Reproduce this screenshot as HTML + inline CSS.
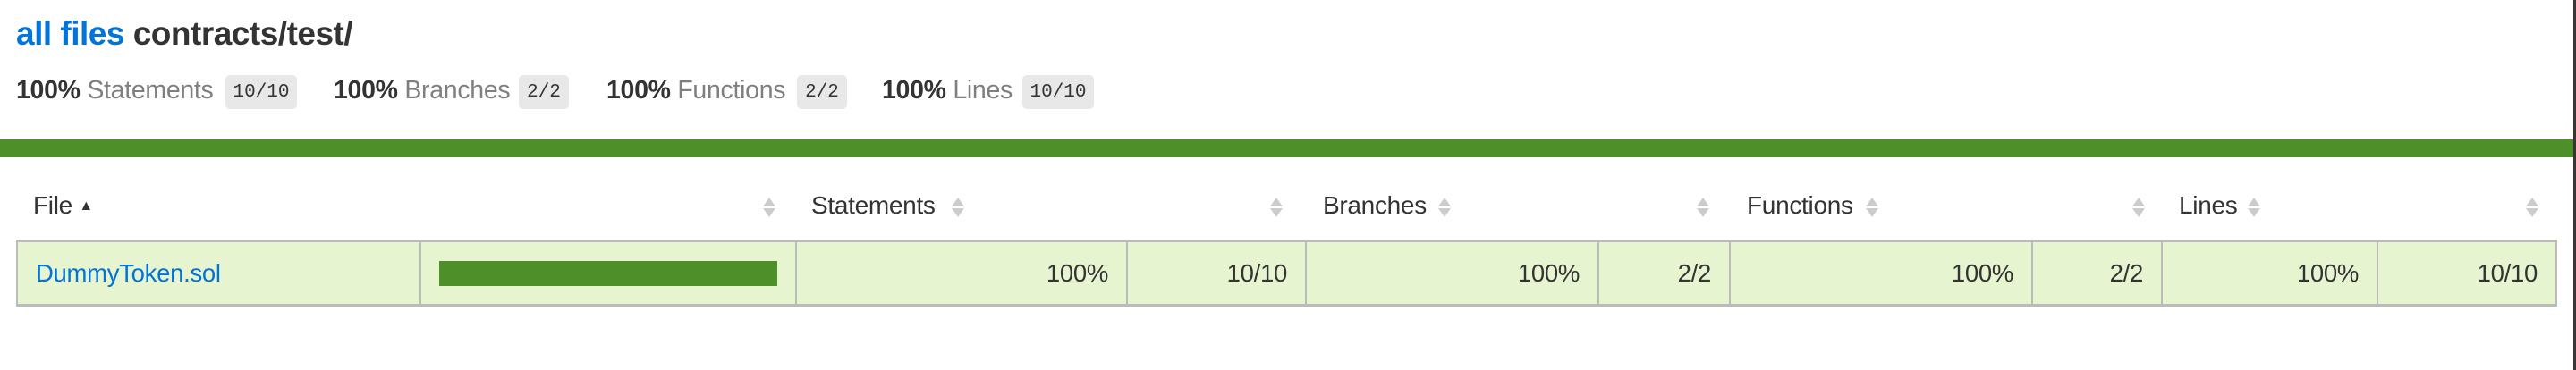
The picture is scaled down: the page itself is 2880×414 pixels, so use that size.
<!DOCTYPE html>
<html><head><meta charset="utf-8"><style>
*{margin:0;padding:0;box-sizing:border-box}
html,body{width:2880px;height:414px;overflow:hidden;background:#3a3533}
#page{position:absolute;left:0;top:0;width:2877px;height:414px;background:#fff;font-family:"Liberation Sans",Arial,sans-serif;color:#333}
.a{position:absolute;white-space:nowrap}
h1{position:absolute;left:18px;top:16px;font-size:37px;font-weight:bold;color:#333;line-height:44px;letter-spacing:-0.5px}
h1 span{color:#0074d9}
.st{font-size:28.5px;line-height:30px;top:86px;letter-spacing:-0.3px}
.st b{color:#333}
.st .q{color:#7f7f7f}
.badge{position:absolute;top:84px;height:38px;background:#e8e8e8;border-radius:5px;font-family:"Liberation Mono",monospace;font-size:21px;line-height:40px;text-align:center;color:#333}
.bar{position:absolute;left:0;top:156px;width:2877px;height:20px;background:#4f8f2a}
.h{font-size:28px;top:215px;line-height:30px;color:#333;letter-spacing:-0.3px}
.sort{position:absolute;top:219px;width:14px;height:26px}
.sort:before{content:"";position:absolute;left:0;top:2px;border-left:7px solid transparent;border-right:7px solid transparent;border-bottom:10px solid #ccc}
.sort:after{content:"";position:absolute;left:0;top:14px;border-left:7px solid transparent;border-right:7px solid transparent;border-top:10px solid #ccc}
table{position:absolute;left:18px;top:268px;width:2841px;border-collapse:collapse;background:#e6f5d0;border-top:3px solid #bbb;border-bottom:3px solid #bbb;border-left:2px solid #bbb;border-right:2px solid #bbb}
td{height:72px;border-left:2px solid #bbb;font-size:27.5px;text-align:right;padding:0 20px;color:#333;letter-spacing:-0.3px}
td:first-child{border-left:none;text-align:left;padding-left:20px}
td a{color:#0074d9;text-decoration:none}
</style></head><body><div id="page">
<h1><span>all files</span> contracts/test/</h1>
<div class="a st" style="left:18px"><b>100%</b> <span class="q">Statements</span></div>
<div class="badge" style="left:252px;width:80px">10/10</div>
<div class="a st" style="left:373px"><b>100%</b> <span class="q">Branches</span></div>
<div class="badge" style="left:580px;width:56px">2/2</div>
<div class="a st" style="left:678px"><b>100%</b> <span class="q">Functions</span></div>
<div class="badge" style="left:891px;width:56px">2/2</div>
<div class="a st" style="left:986px"><b>100%</b> <span class="q">Lines</span></div>
<div class="badge" style="left:1143px;width:80px">10/10</div>
<div class="bar"></div>
<div class="a h" style="left:37px">File <span style="font-size:16px;position:relative;top:-4px">&#9650;</span></div>
<div class="sort" style="left:853px"></div>
<div class="a h" style="left:907px">Statements</div><div class="sort" style="left:1064px"></div>
<div class="sort" style="left:1420px"></div>
<div class="a h" style="left:1479px">Branches</div><div class="sort" style="left:1608px"></div>
<div class="sort" style="left:1897px"></div>
<div class="a h" style="left:1953px">Functions</div><div class="sort" style="left:2086px"></div>
<div class="sort" style="left:2384px"></div>
<div class="a h" style="left:2436px">Lines</div><div class="sort" style="left:2513px"></div>
<div class="sort" style="left:2824px"></div>
<table><tr>
<td style="width:451px"><a>DummyToken.sol</a></td>
<td style="width:418px;padding:0 20px"><div style="width:378px;height:28px;background:#4f8f2a"></div></td>
<td style="width:370px">100%</td>
<td style="width:200px">10/10</td>
<td style="width:327px">100%</td>
<td style="width:147px">2/2</td>
<td style="width:338px">100%</td>
<td style="width:145px">2/2</td>
<td style="width:241px">100%</td>
<td>10/10</td>
</tr></table>
</div></body></html>
